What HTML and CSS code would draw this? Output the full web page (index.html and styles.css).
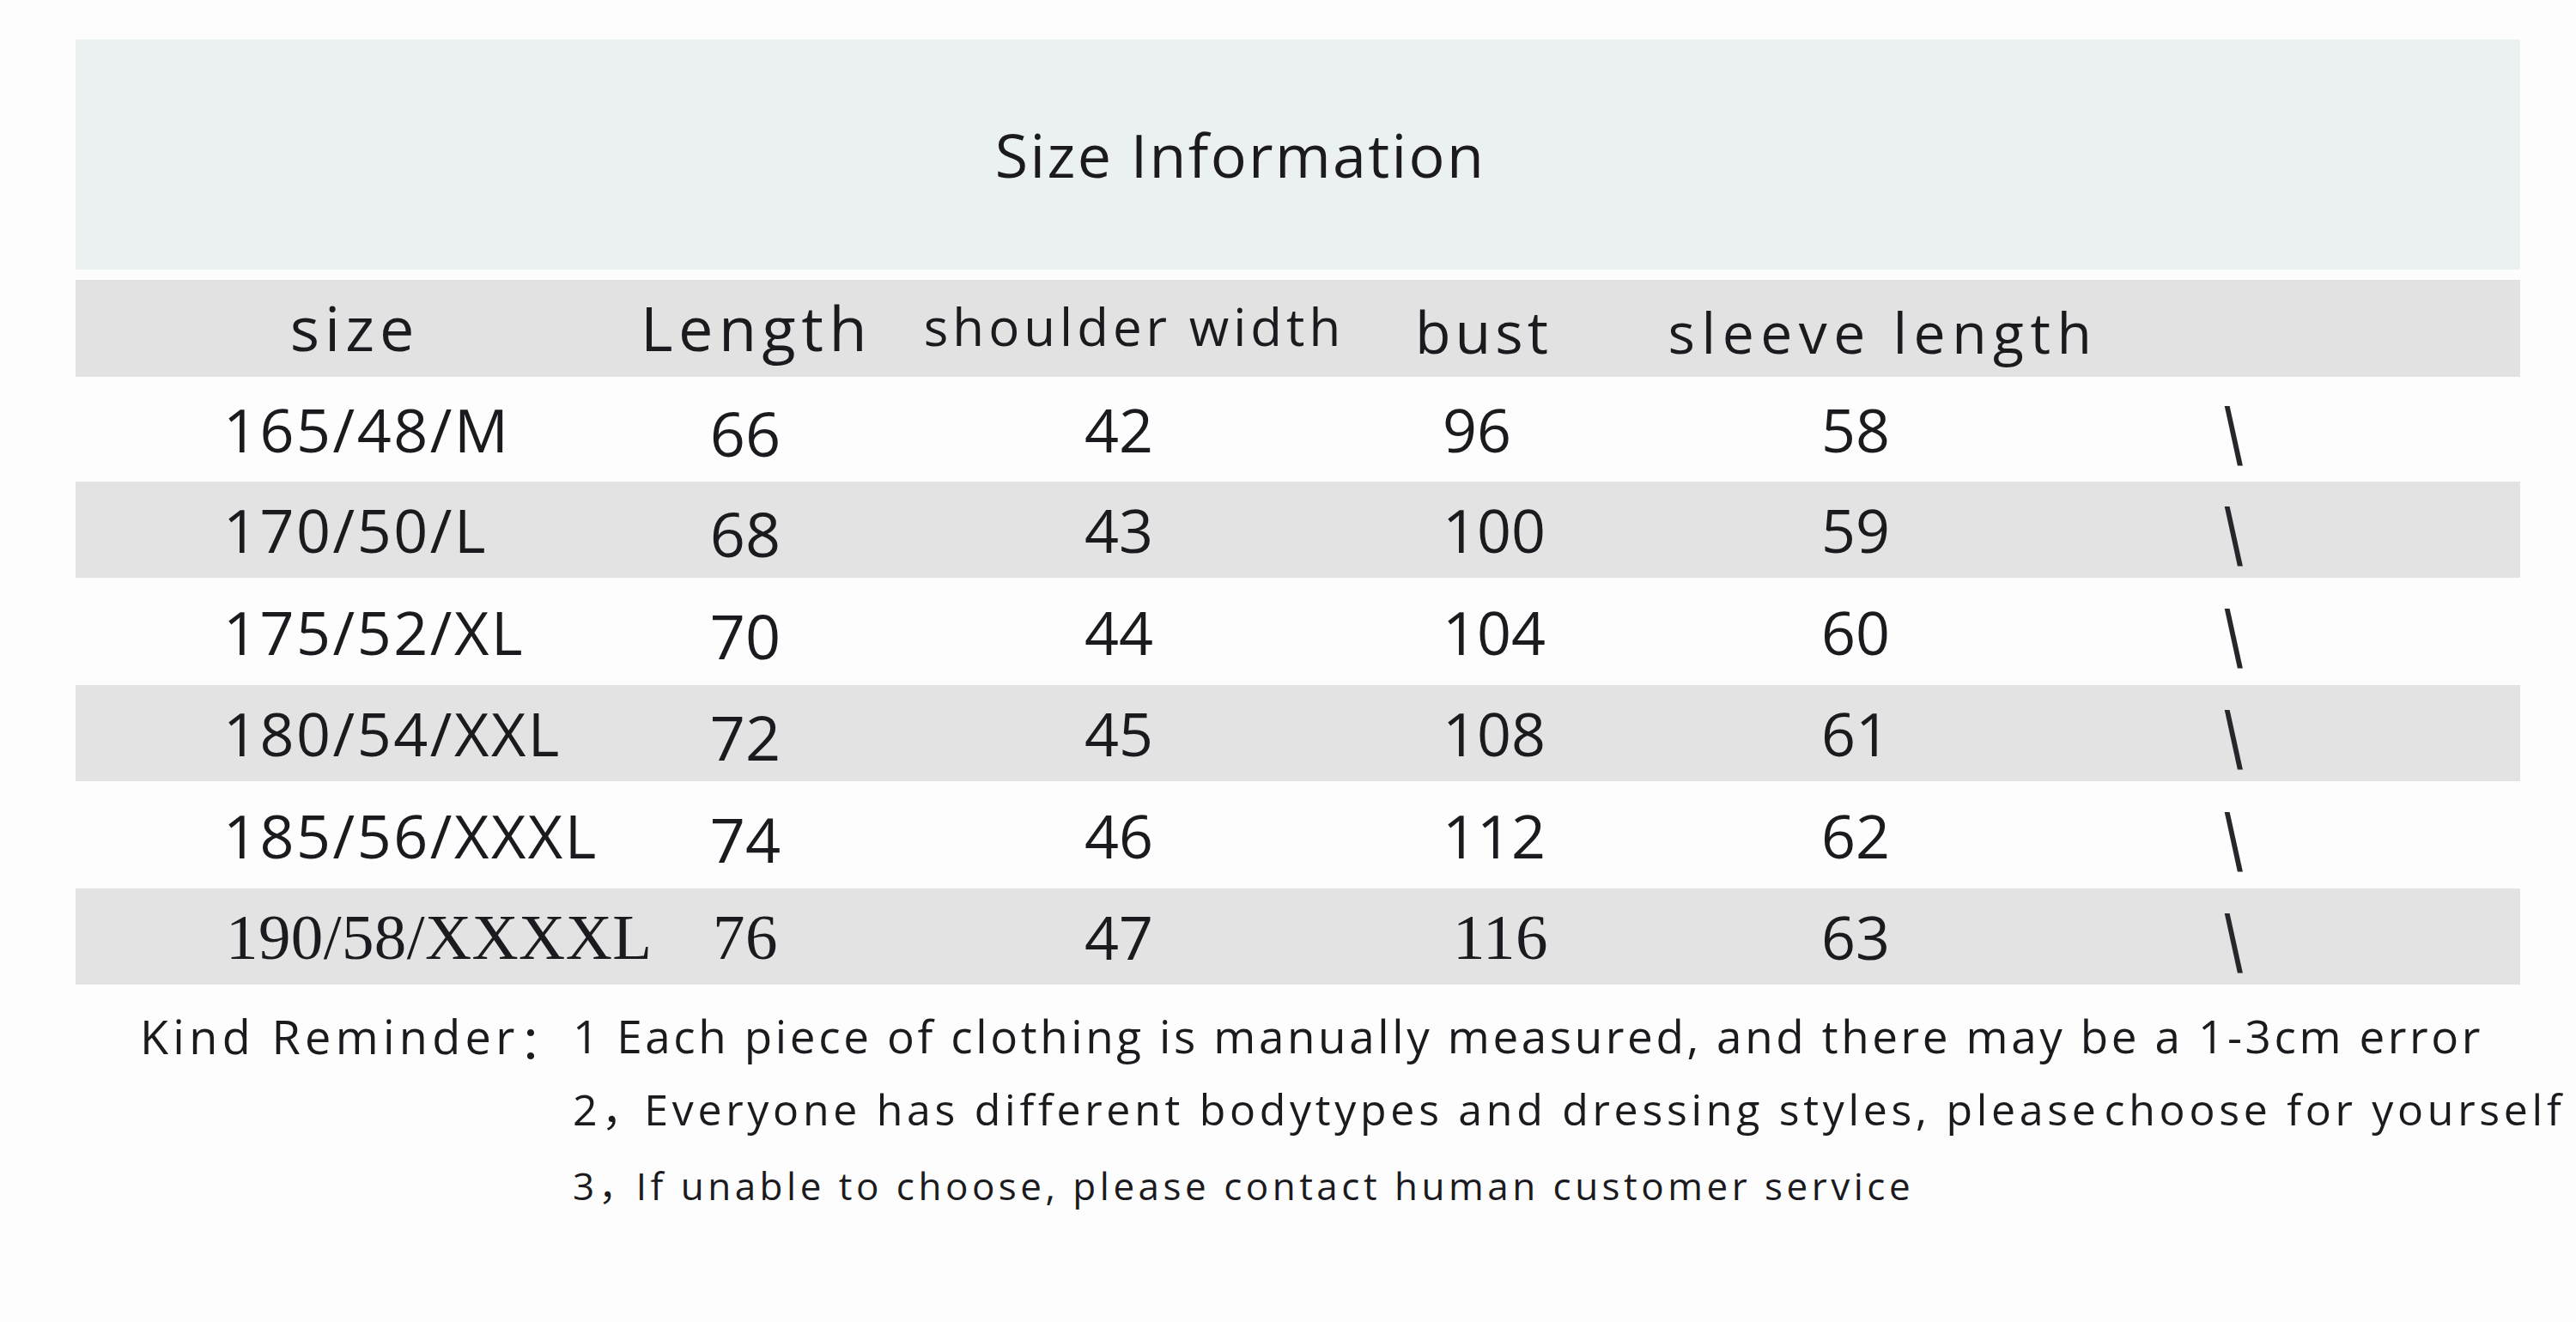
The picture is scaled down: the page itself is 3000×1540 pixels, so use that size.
FILE: index.html
```html
<!DOCTYPE html>
<html lang="en">
<head>
<meta charset="utf-8">
<title>Size Information</title>
<link rel="stylesheet" href="styles.css">
</head>
<body>
<main class="sheet">
  <section class="chart">
    <h1 class="title">Size Information</h1>
    <div class="row head">
      <div class="h h-size">size</div>
      <div class="h h-len">Length</div>
      <div class="h h-sh">shoulder width</div>
      <div class="h h-bust">bust</div>
      <div class="h h-sl">sleeve length</div>
      <div class="h"></div>
    </div>
    <div class="row white">
      <div class="c c-size">165/48/M</div><div class="c c-len">66</div><div class="c c-sh">42</div><div class="c c-bust">96</div><div class="c c-sl">58</div><div class="c c-na"><span class="na">\</span></div>
    </div>
    <div class="row gray">
      <div class="c c-size">170/50/L</div><div class="c c-len">68</div><div class="c c-sh">43</div><div class="c c-bust">100</div><div class="c c-sl">59</div><div class="c c-na"><span class="na">\</span></div>
    </div>
    <div class="row white">
      <div class="c c-size">175/52/XL</div><div class="c c-len">70</div><div class="c c-sh">44</div><div class="c c-bust">104</div><div class="c c-sl">60</div><div class="c c-na"><span class="na">\</span></div>
    </div>
    <div class="row gray">
      <div class="c c-size">180/54/XXL</div><div class="c c-len">72</div><div class="c c-sh">45</div><div class="c c-bust">108</div><div class="c c-sl">61</div><div class="c c-na"><span class="na">\</span></div>
    </div>
    <div class="row white">
      <div class="c c-size">185/56/XXXL</div><div class="c c-len">74</div><div class="c c-sh">46</div><div class="c c-bust">112</div><div class="c c-sl">62</div><div class="c c-na"><span class="na">\</span></div>
    </div>
    <div class="row gray">
      <div class="c c-size serif">190/58/XXXXL</div><div class="c c-len serif">76</div><div class="c c-sh">47</div><div class="c c-bust serif">116</div><div class="c c-sl">63</div><div class="c c-na"><span class="na">\</span></div>
    </div>
  </section>
  <section class="reminder">
    <div class="label">Kind Reminder<span class="colon">：</span></div>
    <div class="notes">
      <p class="note n1">1 Each piece of clothing is manually measured, and there may be a 1-3cm error</p>
      <p class="note n2">2<span class="cjk">，</span>Everyone has different bodytypes and dressing styles, please<span class="tight"> </span>choose for yourself</p>
      <p class="note n3">3<span class="cjk">，</span>If unable to choose, please contact human customer service</p>
    </div>
  </section>
</main>
</body>
</html>
```
FILE: styles.css
```css
html, body {
  margin: 0;
  padding: 0;
}
body {
  background: #fdfdfd;
  color: #1b1b1f;
  font-family: "Open Sans", "Noto Sans", sans-serif;
  width: 3000px;
  height: 1540px;
  overflow: hidden;
}
.sheet {
  padding: 46px 65px 0 88px;
}
.title {
  margin: 0 0 12px 0;
  height: 268px;
  background: #ebf0f0;
  display: flex;
  align-items: center;
  justify-content: center;
  padding-right: 134px;
  font-size: 70px;
  font-weight: 400;
  line-height: 1;
  letter-spacing: 2.3px;
}
.row {
  display: grid;
  grid-template-columns: 650px 286px 594px 220px 710px 1fr;
  align-items: center;
}
.head {
  height: 113px;
  background: #e2e2e2;
}
.white {
  height: 125px;
  background: #fdfdfd;
}
.gray {
  height: 112px;
  background: #e3e3e3;
}
.row:nth-of-type(2) {
  height: 122px;
}
.h {
  text-align: center;
  line-height: 1;
  white-space: nowrap;
}
.h-size {
  font-size: 72px;
  letter-spacing: 6px;
  padding-bottom: 4px;
}
.h-len {
  font-size: 72px;
  letter-spacing: 6.5px;
  padding-bottom: 4px;
}
.h-sh {
  font-size: 60px;
  letter-spacing: 5px;
  padding-bottom: 6px;
}
.h-bust {
  font-size: 68px;
  letter-spacing: 5px;
  padding-top: 6px;
}
.h-sl {
  font-size: 66px;
  letter-spacing: 7.5px;
  padding-top: 6px;
}
.c {
  font-size: 70px;
  line-height: 1;
  white-space: nowrap;
}
.c-size {
  padding-left: 172px;
  letter-spacing: 2.5px;
}
.c-len {
  text-align: center;
  padding-right: 26px;
  padding-top: 8px;
  font-size: 72px;
}
.c-sh {
  text-align: center;
  padding-right: 36px;
}
.c-bust {
  padding-left: 62px;
}
.c-sl {
  text-align: center;
  padding-right: 64px;
}
.c-na {
  padding-left: 44px;
  line-height: 1;
}
.na {
  display: inline-block;
  font-family: "Liberation Sans", Arial, sans-serif;
  font-size: 68px;
  line-height: 1;
  color: #26262b;
  transform: scale(1.12, 1.38);
  transform-origin: 50% 40%;
  padding-top: 8px;
}
.serif {
  font-family: "Liberation Serif", "Times New Roman", serif;
  font-size: 75px;
  letter-spacing: 0.4px;
}
.c-size.serif {
  padding-left: 175px;
}
.c-bust.serif {
  padding-left: 74px;
}
.c-len.serif {
  padding-top: 0;
}
.reminder {
  display: flex;
  align-items: flex-start;
  padding-left: 75px;
  margin-top: 20px;
}
.label {
  width: 504px;
  flex: none;
  font-size: 54px;
  line-height: 80px;
  letter-spacing: 5.3px;
  white-space: nowrap;
}
.colon {
  font-family: "Noto Sans CJK SC", sans-serif;
  letter-spacing: 0;
  vertical-align: -6px;
}
.cjk {
  font-family: "Noto Sans CJK SC", sans-serif;
  letter-spacing: 0;
}
.tight {
  letter-spacing: -8px;
}
.notes {
  display: flex;
  flex-direction: column;
}
.note {
  margin: 0;
  white-space: nowrap;
}
.n1 {
  font-size: 53px;
  line-height: 80px;
  letter-spacing: 3.6px;
}
.n2 {
  font-size: 50px;
  line-height: 84px;
  letter-spacing: 4.7px;
}
.n3 {
  font-size: 44px;
  line-height: 90px;
  letter-spacing: 4.5px;
}
```
